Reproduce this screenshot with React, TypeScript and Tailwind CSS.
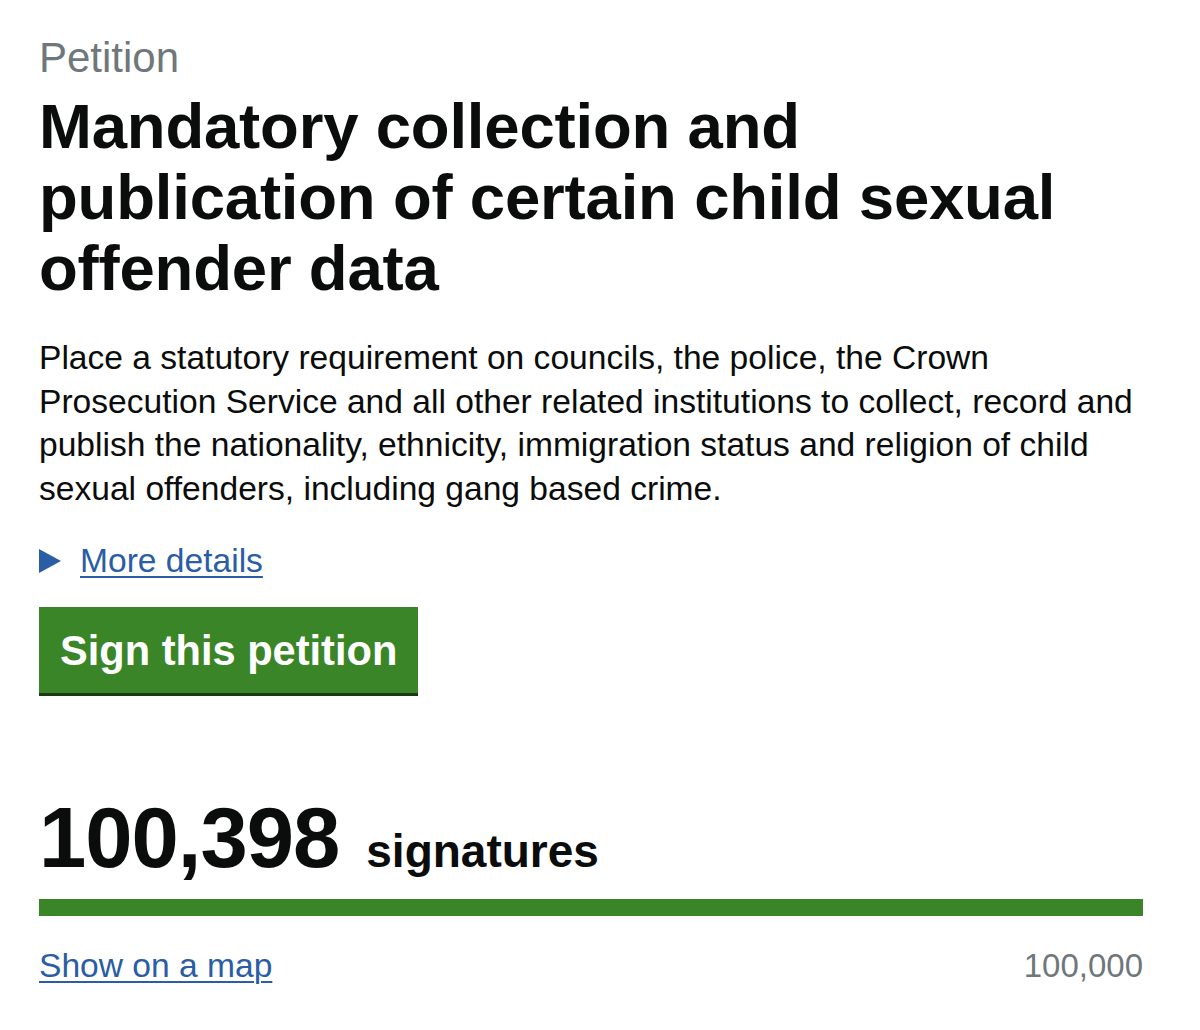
import React from "react";

export default function App() {
  const count = 100398;
  const target = 100000;
  const pct = Math.min(100, (count / target) * 100);

  return (
    <div className="min-h-screen bg-white font-['Liberation_Sans',Arial,sans-serif] text-[#0b0c0c]">
      <div className="pl-[39px] pr-[57px] pt-[35px]">
        <p className="text-[42px] leading-[46px] text-[#6f777b]">Petition</p>
        <h1 className="mt-[10px] text-[63.5px] leading-[71px] font-bold tracking-[-0.2px]">
          Mandatory collection and publication of certain child sexual offender data
        </h1>

        <p className="mt-[32px] text-[33.6px] leading-[43.5px]">
          Place a statutory requirement on councils, the police, the Crown Prosecution Service and all other related institutions to collect, record and publish the nationality, ethnicity, immigration status and religion of child sexual offenders, including gang based crime.
        </p>

        <div className="mt-[31px] flex items-center gap-[19px]">
          <svg width="22" height="24" viewBox="0 0 22 24" className="shrink-0">
            <polygon points="0,0 22,12 0,24" fill="#2a5da6" />
          </svg>
          <a href="#" className="text-[33.6px] leading-[40px] text-[#2a5da6] underline underline-offset-[4px] decoration-[2px]">
            More details
          </a>
        </div>

        <button className="mt-[26px] bg-[#3a8527] text-white text-[41.6px] leading-[48px] font-bold px-[21px] pt-[20px] pb-[18px] shadow-[0_3px_0_#1c3a12]">
          Sign this petition
        </button>

        <div className="mt-[104px] flex items-baseline gap-[27px]">
          <span className="text-[85px] leading-[82px] font-bold tracking-[-1px]">100,398</span>
          <span className="text-[46px] leading-[48px] font-bold">signatures</span>
        </div>

        <div className="mt-[20px] h-[17px] bg-[#e6e6e6]">
          <div className="h-full bg-[#3a8527]" style={{ width: `${pct}%` }} />
        </div>

        <div className="mt-[30px] flex items-baseline justify-between">
          <a href="#" className="text-[33.6px] leading-[40px] text-[#2a5da6] underline underline-offset-[4px] decoration-[2px]">
            Show on a map
          </a>
          <span className="text-[33px] leading-[40px] text-[#6f777b]">100,000</span>
        </div>
      </div>
    </div>
  );
}
